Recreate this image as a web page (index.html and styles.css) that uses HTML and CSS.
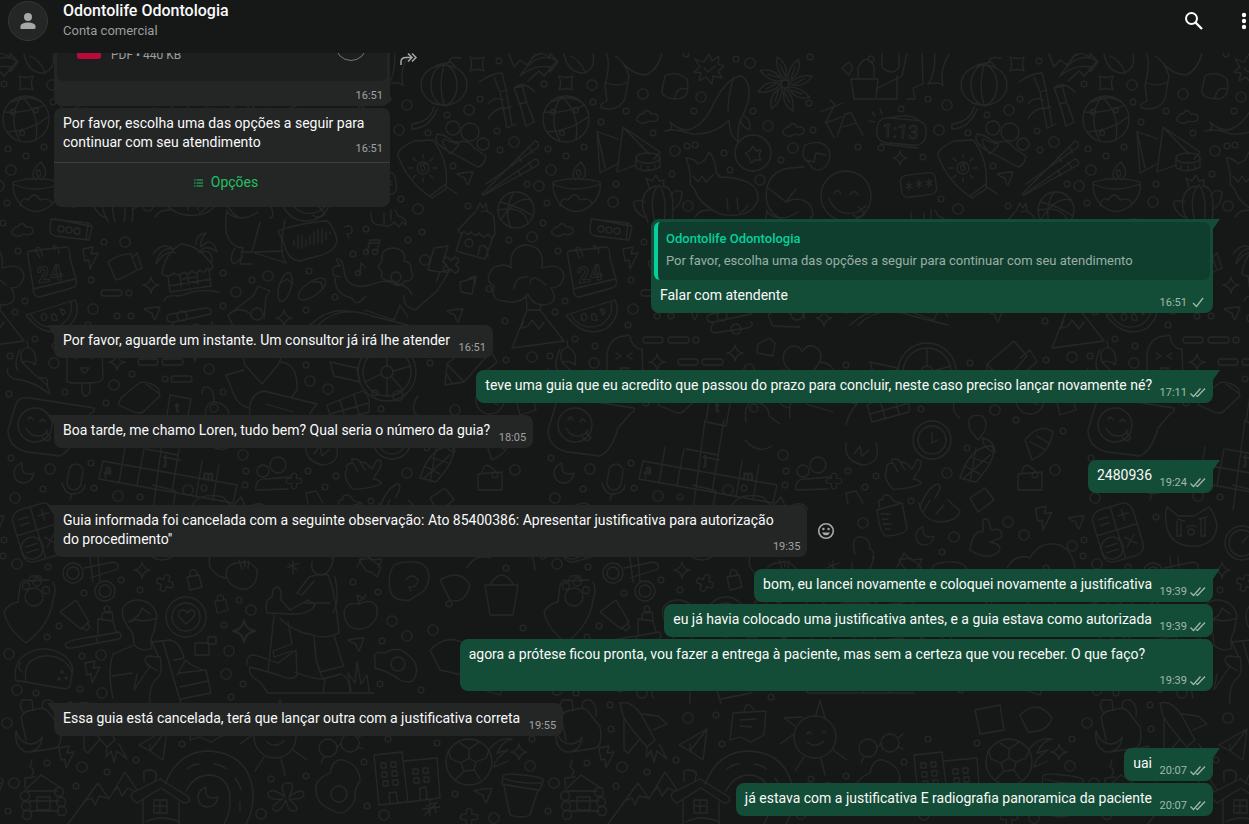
FILE: index.html
```html
<!DOCTYPE html>
<html lang="pt-BR">
<head>
<meta charset="utf-8">
<meta name="viewport" content="width=device-width, initial-scale=1">
<title>Odontolife Odontologia</title>
<link rel="stylesheet" href="styles.css">
</head>
<body>
<div class="app">
<svg class="wallpaper" aria-hidden="true">
<defs>
<symbol id="spark" viewBox="-10 -10 20 20" overflow="visible"><path d="M0-8Q1-1 8 0Q1 1 0 8Q-1 1-8 0Q-1-1 0-8Z"/></symbol>
<symbol id="bolt" viewBox="-10 -14 20 28" overflow="visible"><path d="M-7-9L3-11L1-4L8-5L0 11L-1 2L-5 3Z"/></symbol>
<symbol id="cloud" viewBox="-12 -8 24 16" overflow="visible"><path d="M-8 5Q-13 2-8-1Q-7-4-4-3Q0-10 4-3Q12-4 11 2Q9 6 2 4Q-3 8-8 5Z"/></symbol>
<symbol id="plus" viewBox="-12 -12 24 24" overflow="visible"><path d="M-3-3V-8Q0-11 3-8V-3H8Q11 0 8 3H3V8Q0 11-3 8V3H-8Q-11 0-8-3Z"/></symbol>
<symbol id="arrow" viewBox="-10 -10 20 20" overflow="visible"><path d="M-8-4Q0-6 8-6Q6 0 3 7Q1 6 0 0Q-4-1-8-4Z"/></symbol>
<symbol id="lock" viewBox="-10 -12 20 24" overflow="visible"><path d="M-7-3L5-5L8 7L-4 10ZM-4-4Q-5-11 0-10Q3-10 3-5"/></symbol>
<symbol id="moon" viewBox="-12 -12 24 24" overflow="visible"><path d="M-2-10Q-4 4 10 0Q8 10-1 10Q-10 9-10-1Q-9-8-2-10Z"/></symbol>
<path id="dots" d="M499 61h0M4 84h0M480 99h0M447 115h0M53 102h0M61 122h0M497 131h0M428 133h0M8 149h0M44 147h0M26 156h0M500 150h0M453 166h0M527 184h0M76 184h0M468 206h0M7 203h0M86 111h0M113 133h0M155 145h0M154 111h0M196 59h0M213 111h0M273 130h0M269 103h0M270 57h0M184 153h0M190 170h0M132 174h0M241 160h0M3 223h0M509 240h0M422 232h0M18 251h0M408 240h0M91 280h0M25 301h0M15 312h0M489 289h0M505 321h0M88 325h0M35 339h0M55 346h0M10 356h0M506 360h0M430 363h0M104 242h0M223 273h0M252 280h0M223 306h0M309 271h0M335 297h0M306 310h0M366 229h0M353 254h0M117 316h0M131 316h0M129 293h0M132 374h0M65 392h0M106 403h0M165 379h0M223 392h0M306 365h0M375 393h0M381 409h0M9 394h0M11 458h0M91 463h0M246 471h0M245 485h0M336 476h0M308 471h0M43 489h0M94 488h0M140 497h0M204 488h0M325 487h0M371 501h0M4 540h0M3 556h0M48 567h0M121 580h0M140 590h0M353 582h0M84 593h0M107 609h0M59 626h0M47 637h0M82 656h0M36 693h0M80 689h0M239 600h0M224 625h0M243 684h0M231 697h0M378 592h0M382 641h0M380 684h0M47 763h0M107 772h0M136 760h0M182 744h0M76 786h0M8 811h0M271 779h0M306 776h0M364 762h0M367 806h0M388 739h0M437 743h0M532 739h0M455 794h0M176 715h0M70 705h0M71 729h0M402 552h0M506 568h0M76 517h0M331 59h0M427 448h0M476 420h0M523 431h0M449 604h0M523 628h0M421 690h0M513 680h0M495 475h0M318 147h0M341 148h0M361 109h0M388 99h0M383 157h0M401 199h0M147 146h0M146 54h0"/>
<path id="rings" d="M52 85h0M407 105h0M469 110h0M514 142h0M11 170h0M-1 186h0M73 202h0M418 209h0M103 94h0M135 151h0M161 97h0M210 63h0M228 126h0M253 148h0M220 180h0M148 206h0M532 237h0M425 260h0M93 309h0M532 357h0M54 363h0M125 242h0M268 276h0M236 292h0M209 369h0M114 385h0M310 381h0M328 389h0M398 396h0M50 469h0M243 455h0M407 473h0M15 498h0M118 496h0M188 490h0M17 564h0M9 654h0M101 655h0M17 690h0M102 693h0M7 723h0M251 610h0M229 651h0M226 674h0M392 621h0M407 636h0M82 767h0M14 783h0M261 814h0M384 815h0M530 766h0M494 818h0M148 718h0M323 523h0M468 522h0M484 535h0M532 546h0M414 537h0M399 130h0M433 630h0M500 650h0M515 470h0M455 410h0"/>
<pattern id="doodles" width="540" height="960" patternUnits="userSpaceOnUse">
<g id="tile" fill="none" stroke="#252727" stroke-width="1.3" stroke-linecap="round" stroke-linejoin="round">
<use href="#dots" stroke-width="7"/>
<use href="#dots" stroke="#161717" stroke-width="4.4"/>
<use href="#rings" stroke-width="11.5"/>
<use href="#rings" stroke="#161717" stroke-width="8.9"/>

<circle cx="26" cy="119" r="23"/><path d="M4 112Q24 114 45 105M7 132Q30 131 48 117M21 97Q7 118 20 141M22 97Q40 113 36 139M12 102Q30 94 41 102"/><circle cx="13" cy="112" r="2.500"/><circle cx="36" cy="110" r="2.500"/><circle cx="22" cy="133" r="2.500"/>
<path d="M19 76Q26 79 33 76Q30 83 33 90Q26 87 19 90Q22 83 19 76Z"/><path d="M470 57Q477 60 484 57Q481 64 484 71Q477 68 470 71Q473 64 470 57Z"/>
<path d="M-8 57L2 53L17 61L4 76L-1 71L-12 81M24 54Q28 74 45 73Q56 67 53 54M30 56Q40 60 45 72"/>
<ellipse cx="444" cy="85" rx="23" ry="20"/><ellipse cx="444" cy="85" rx="13" ry="20"/><path d="M444 65Q438 86 444 105M437 65L451 62L455 66M449 62Q449 56 461 58M432 103L446 106M434 107Q430 122 412 124V129Q430 128 437 109"/>
<path d="M508 52L514 67L520 60L527 65L536 54M520 76Q534 54 550 58V53L558 62L550 72V67Q535 64 520 76"/>
<path d="M479 82Q492 73 502 73L506 90L512 125M494 77L500 92L507 128L516 124M500 92L507 90M503 109L511 107M514 88L520 104L526 126L534 122M522 86L527 103L534 122M514 88L524 86M519 104L527 102M488 104Q494 96 504 100M488 119Q494 108 504 108M514 88Q523 80 535 92"/>
<path d="M66 53Q71 63 65 85L67 101Q58 104 62 108Q78 112 85 99L89 76Q84 60 75 56M66 83Q78 87 88 82M83 63Q91 74 106 75Q118 70 122 53"/>
<path d="M125 76Q136 70 147 79Q151 98 137 99Q121 98 122 90ZM135 98Q137 86 147 89"/>
<path d="M169 54L172 61L179 56L178 64L184 66L178 71L182 78L173 76L172 84L166 77L159 81L161 73L154 72L160 67L155 59L164 62ZM164 68L168 72L175 66"/>
<path d="M125 131Q135 130 130 122Q138 130 148 130Q164 126 174 103Q188 76 202 76Q216 88 203 115Q197 124 198 142Q189 135 189 120Q175 135 151 134Q136 128 125 131ZM203 115Q211 119 210 130Q203 128 200 120M188 111Q188 94 194 77"/>
<g id="petals"><path id="petal" d="M245 80Q235 71 237 57Q250 65 245 80ZM245 75Q241 67 240 65"/><use href="#petal" transform="rotate(45 245 84)"/><use href="#petal" transform="rotate(90 245 84)"/><use href="#petal" transform="rotate(135 245 84)"/></g><use href="#petals" transform="rotate(180 245 84)"/><circle cx="245" cy="84" r="4"/>
<use href="#cloud" x="95" y="109" width="24" height="16"/><use href="#cloud" x="241" y="122" width="24" height="16"/><use href="#cloud" x="10" y="222" width="24" height="16"/>
<path d="M482 194L535 141Q540 142 538 147L486 184M483 195L535 159Q540 160 538 165L484 195ZM518 157L522 162M529 147L533 153M518 170L521 176M528 162L532 168"/>
<path d="M433 140L414 141Q393 151 399 158Q408 182 432 198L446 189Q449 160 433 140ZM430 196L446 184M447 187L457 194"/><circle cx="423" cy="168" r="6"/><path d="M423 165Q428 170 422 171Q418 165 425 164M423 158V155M423 178V182M413 168H409M433 168H437M416 161L413 158M430 161L433 158M416 175L413 178M430 175L433 178"/>
<circle cx="453" cy="128" r="7"/><circle cx="470" cy="132" r="9"/><circle cx="483" cy="144" r="6"/><path d="M437 134Q432 143 450 152L478 167Q484 166 486 156L474 148Q467 137 455 144Q448 135 437 134ZM443 144Q441 136 450 142Q460 140 458 146L450 154Z"/>
<path d="M13 182Q36 175 60 182Q62 196 50 206Q35 218 20 204Q12 194 13 182ZM13 184Q34 194 60 184M36 180Q28 173 41 162Q50 174 41 180M38 176Q34 170 39 170Q43 175 38 177M20 206Q22 196 28 200Q35 190 40 200Q50 197 52 204"/>
<circle cx="516" cy="210" r="18"/><path d="M500 202Q516 205 533 216M501 220Q515 196 531 200M514 192Q503 210 511 228M498 210Q525 205 528 224"/>
<path d="M57 131L60 173L77 164M58 132L78 139M57 131L65 168M83 127L77 172L96 165M83 127L120 152L114 159M83 127L109 154"/><ellipse cx="108" cy="158" rx="12" ry="5"/><path d="M96 159V168Q108 174 120 167V159M101 165V169M108 166V170M115 165V168"/>
<circle cx="213" cy="153" r="18"/><path d="M213 146L216 151L221 150L219 156L221 160L215 160L211 163L209 157L205 153L210 151Z"/>
<path d="M146 158Q154 158 158 164L165 160L169 152Q176 160 176 172L180 177Q220 178 218 200Q210 220 180 214Q158 203 155 190L150 184Q152 175 146 158ZM153 176L158 182L162 176L166 182L173 175M188 210L187 199M198 210L197 198M208 205Q206 210 199 213M155 217Q158 210 170 210"/>
<path d="M116 186Q100 190 103 210L108 222M119 185Q108 195 115 222M124 186Q136 188 132 222M119 185Q128 198 124 222M109 187L106 178L112 181L116 175L119 181L124 180L123 187M105 202Q92 198 94 206Q98 216 107 218M131 196Q134 188 142 192Q142 205 132 210"/>
<path d="M227 187Q232 170 250 168L264 167M227 187L246 202L249 198L256 189M227 187Q223 210 240 218M246 202Q260 195 270 205Q276 217 270 218M265 145Q282 138 289 150Q292 160 285 167Q275 175 268 162Q260 158 265 145M265 160L274 162L276 153L286 155"/><circle cx="306" cy="196" r="25"/><path d="M294 194Q297 187 301 194M310 195Q314 188 318 195M289 199Q298 218 318 212L326 206M313 215Q318 220 325 214L319 207"/>
<rect x="361" y="174" width="35" height="22" rx="6" transform="rotate(-7 378 185)"/><path d="M369 182V190M366 184L372 188M366 188L372 184M379 180V188M376 182L382 186M376 186L382 182M389 179V187M386 181L392 185M386 185L392 181"/>
<rect x="337" y="119" width="49" height="25" rx="10" transform="rotate(5 361 131)"/><path d="M341 144L378 148M350 118Q370 113 378 120M332 112L335 116M340 109L342 114M329 121L334 122"/><text x="342" y="138" font-size="19" transform="rotate(4 361 131)">1:13</text>
<path d="M280 112L303 103M290 100L295 104L286 122L294 138M285 123L302 117M297 137L305 114L311 113L323 135M303 127L316 123"/>
<path d="M311 79H338L336 99H314ZM336 89L362 76L367 53M357 76V99H338M367 99H375L373 88L383 84L382 53M318 78V68Q325 52 334 66V77M342 53V67Q352 77 359 67V53M309 62L302 68L309 75L313 67ZM395 53Q395 76 388 84M388 84Q400 81 403 86Q399 70 409 54"/>
<path d="M475 212L458 230Q461 236 464 231Q467 237 471 232Q475 238 479 233Q484 240 488 234Q492 241 495 234L494 217Q488 209 481 212M462 233L456 251L485 259L493 237M476 211L480 203L483 208L486 203L487 211M478 255L480 246Q488 243 488 257"/><circle cx="469" cy="243" r="4"/>
<path d="M51 219L88 223Q94 225 91 231L89 240L55 236Q49 234 50 229ZM55 219L90 226M88 223L86 240"/><circle cx="61" cy="229" r="3"/><circle cx="69" cy="230" r="3"/><circle cx="77" cy="231" r="3"/>
<path d="M29 251L67 247Q70 248 70 258L76 279Q78 286 72 288L39 297Q33 297 33 286L28 257Q27 252 29 251ZM33 289L75 279M40 258Q32 245 40 248L43 256M55 250Q51 242 58 248L59 253"/><text x="37" y="281" font-size="22" font-weight="bold" transform="rotate(-9 52 272)">24</text>
<path d="M26 315L75 300Q82 315 67 328Q45 340 26 315ZM31 315Q42 332 61 325Q74 316 71 302M41 316Q45 310 47 318Q43 324 41 316M52 314Q56 312 57 320Q50 322 52 314M60 309Q68 310 63 315Z"/>
<use href="#bolt" x="80" y="244" width="20" height="28"/><path d="M108 262Q122 253 131 254L137 270Q124 278 116 280Z"/><path d="M133 257L137 253L142 268L138 270"/>
<path d="M162 274Q165 253 181 244Q199 245 213 266Q212 272 207 268Q205 275 200 270Q196 275 192 271Q188 276 184 272Q178 277 174 273Q168 279 162 274ZM168 276L170 292L211 286L209 270M169 286L211 279M180 275L181 287M187 273L189 285M197 272L198 284M182 279L196 277M164 301Q165 294 180 296Q200 288 219 292M153 254Q162 241 174 249Q160 246 156 264Q166 249 176 253M196 244Q196 234 206 233Q199 241 201 247Q212 235 217 252Q205 243 199 253Q212 247 212 262"/>
<path d="M278 231L290 227Q315 221 328 221Q336 231 337 241Q335 252 318 256L300 261Q288 260 285 246ZM294 240V245M298 236V248M302 235V248M306 240V246M310 236V244M314 232V245M318 230V243M322 229V243M326 232V239M330 232V234"/>
<path d="M227 210Q221 246 243 248M260 222L252 252L286 263Q278 252 285 220M227 212Q240 224 258 212M243 248L240 264L252 264M252 252L241 252M235 248Q228 260 234 264L243 257M255 252L283 251"/>
<ellipse cx="285" cy="287" rx="6" ry="15" transform="rotate(16 285 287)"/><ellipse cx="312" cy="289" rx="7" ry="16" transform="rotate(55 312 289)"/><path d="M280 283L287 279L293 284M313 282L321 282L323 289"/>
<path d="M367 252L370 240L380 240L377 251M369 243L379 243"/><circle cx="366" cy="252" r="2.500"/><circle cx="375" cy="252" r="2.500"/><path d="M360 274L361 263L365 267"/><circle cx="358" cy="273" r="2.500"/>
<path d="M371 212Q370 226 382 225Q390 228 394 222L399 227L402 222L406 225Q407 218 398 216L395 210M384 213V224M391 210V220M344 227Q352 224 352 230Q353 234 347 234L349 238"/>
<path d="M340 277L333 275Q332 264 340 266L336 259Q341 258 343 265L345 276Q350 290 370 285Q385 279 392 283Q408 284 412 295M366 296Q356 308 352 298Q335 295 335 278M382 262Q380 248 394 248Q407 250 404 261Q412 262 411 270Q416 281 405 281Q398 290 391 281Q379 280 382 272Q375 266 382 262Z"/><circle cx="396" cy="277" r="5"/>
<path d="M504 301Q490 301 494 286Q483 280 493 268Q505 262 511 268Q509 246 526 245Q545 246 542 268Q562 262 564 276Q562 288 551 288Q560 304 543 305Q531 304 528 294Q520 305 504 301ZM514 289Q515 276 528 277M530 283Q532 272 546 285M526 295L527 310H540L541 304M527 310L512 348L564 341L540 310M524 320L521 328L528 326L532 320L539 329L544 322M434 248L448 246L443 262L450 270L437 291L415 310Q402 306 404 296M434 248L428 270L440 272L450 270M440 272L436 282M460 282L475 278L472 294L461 292ZM469 278L476 276L475 284"/>
<use href="#plus" x="439" y="253" width="24" height="24" transform="rotate(45 451 265)"/>
<use href="#spark" x="141" y="275" width="20" height="20"/><use href="#spark" x="274" y="308" width="20" height="20"/><use href="#spark" x="107" y="352" width="20" height="20"/><use href="#spark" x="132" y="560" width="20" height="20"/><use href="#spark" x="230" y="617" width="28" height="28"/><use href="#spark" x="509" y="742" width="20" height="20"/><use href="#spark" x="351" y="149" width="18" height="18"/><use href="#spark" x="185" y="343" width="20" height="20"/>
<use href="#arrow" x="142" y="303" width="20" height="20"/><use href="#arrow" x="455" y="168" width="20" height="20"/><use href="#arrow" x="445" y="305" width="20" height="20"/><use href="#arrow" x="472" y="784" width="22" height="22"/><use href="#arrow" x="346" y="634" width="20" height="20"/>
<path d="M167 319Q166 315 172 314L205 308Q213 308 211 314L174 322Q168 323 167 319ZM174 322Q168 331 174 333L207 328Q215 326 211 322"/><circle cx="182" cy="316" r="5"/><circle cx="196" cy="329" r="5"/>
<path d="M228 315L254 295M254 295L258 286L270 291L266 297L264 319M228 315L233 326L260 327M228 315Q240 305 250 314"/><circle cx="257" cy="314" r="6"/>
<rect x="101" y="290" width="21" height="6" rx="3"/><rect x="138" y="359" width="20" height="6" rx="3"/><rect x="162" y="359" width="21" height="6" rx="3"/><rect x="171" y="376" width="21" height="6" rx="3"/><rect x="103" y="337" width="20" height="6" rx="3"/><rect x="128" y="337" width="21" height="6" rx="3"/><circle cx="156" cy="340" r="3"/><path d="M218 344L229 338L235 343L233 356L217 353Z"/>
<path d="M67 382V354Q70 336 86 336Q91 333 91 341Q96 350 102 349L103 378Q101 383 90 383H72ZM82 383V392Q85 400 90 392V383M76 353L81 356L76 359M92 353L87 356L92 359M80 368H89M81 369Q84 377 88 369"/>
<path d="M8 368Q5 374 14 379Q32 380 50 394Q48 382 35 375L22 362M22 362Q18 350 28 347L27 341M28 347Q38 352 35 365Q30 360 22 362M20 349Q13 364 18 371M39 378Q50 376 47 386"/>
<path d="M262 384L245 365Q240 352 250 347Q259 344 262 352Q268 342 277 348Q285 355 277 366ZM226 375L244 370M226 375L234 395Q240 407 250 408M279 362Q298 362 297 390L291 398M250 418Q247 394 264 391L317 404Q308 414 306 425M266 404L293 412"/>
<circle cx="387" cy="372" r="29"/><circle cx="387" cy="372" r="24"/><circle cx="387" cy="372" r="6"/><path d="M387 348V366M387 378V396M393 371L411 366M381 374L365 382M391 376L403 390M310 325Q330 306 352 312M318 325Q340 304 372 316L408 325M365 310L394 320L400 305L408 317M330 362L357 368L360 382L334 376Z"/>
<path d="M445 385L447 364L474 341L487 356L464 382ZM447 364L464 382M447 375L453 384M480 358L490 350L497 362L485 372"/>
<path d="M121 398L139 383Q147 380 158 388L160 396L145 410Q140 416 130 410L118 405ZM146 384L158 393M170 395L191 399L186 426L166 422ZM202 394Q202 386 207 387Q214 388 214 402M206 422Q203 401 216 402Q229 405 229 416L240 424"/><circle cx="214" cy="408" r="4"/><text x="175" y="412" font-size="13">t</text>
<path d="M327 405L362 391Q371 394 369 412L332 422ZM340 400L345 418M354 395L359 414M330 414L369 403M418 396Q408 410 420 418"/>
<path d="M16 404Q19 396 30 398L94 408Q96 411 90 414L78 428Q72 450 60 456L28 452Q8 448 8 430Z"/><circle cx="35" cy="425" r="17"/><path d="M28 420Q30 414 33 420M40 422Q43 416 45 422M26 428Q32 440 45 434L48 430M42 436Q46 444 51 438L46 432"/>
<path d="M103 461L237 485L233 503L99 479ZM125 447L119 483M144 449L137 485M184 420L172 492M165 420L153 510M146 449L178 455M163 457L180 460M202 461L196 497M219 464L213 500M153 485L176 491L171 515M106 478L104 472"/><text x="105" y="474" font-size="12">a</text><text x="164" y="464" font-size="12">j</text><text x="203" y="480" font-size="12">m</text>
<use href="#moon" x="12" y="461" width="24" height="24"/><rect x="68" y="464" width="14" height="26" rx="7" transform="rotate(10 75 477)"/><path d="M62 483Q65 495 74 494Q84 493 85 485M72 494L70 500M205 440Q218 455 232 446M306 443Q303 460 322 465Q342 464 336 443M314 454L320 446L322 456L329 450"/>
<circle cx="263" cy="471" r="6"/><circle cx="278" cy="465" r="8"/><path d="M256 490Q255 478 266 479L290 477M257 490L288 489"/><use href="#plus" x="284" y="471" width="20" height="20"/>
<path d="M347 469Q345 464 352 463L352 459Q357 458 361 462L366 463L372 469L377 460Q384 459 379 470L373 479Q381 480 381 484Q365 490 353 489Q342 478 347 469ZM353 463L358 472M360 462L365 470M380 507Q388 486 398 484Q403 486 395 498M383 512L390 500M340 507Q336 500 343 499Q342 493 350 496Q355 504 360 502"/><circle cx="392" cy="440" r="19"/><circle cx="392" cy="440" r="14"/><path d="M392 433V443L398 440"/>
<path d="M192 505Q200 492 223 497L232 507L241 497L247 510Q258 498 268 509M308 504L306 493L316 491L323 503"/>
<g transform="rotate(-17 37 533)"><rect x="17" y="506" width="42" height="54" rx="10"/><path d="M38 506V560M17 530H59M48 512V523M43 517H54M23 515H33M23 521H33"/><circle cx="28" cy="546" r="11"/><path d="M22 543H34M22 549H34M43 539L53 549M53 539L43 549"/></g>
<path d="M87 507L98 516L114 516L129 507Q134 512 137 525Q136 543 118 546Q92 548 87 528Q84 515 87 507ZM98 519L105 521M97 521V536H101V522M119 519L127 517M121 519V536H125V518M107 527Q112 524 116 527"/><circle cx="111" cy="532" r="3"/>
<circle cx="162" cy="543" r="17"/><circle cx="162" cy="543" r="13"/><path d="M162 543L168 536M337 510L362 503L367 528Q366 535 346 536Q340 534 337 510ZM341 514H350M342 519H348M343 524H351M345 529H350M379 503Q382 519 398 522Q417 522 420 511L408 500M396 514L404 505M430 550Q433 529 443 532L443 520Q449 515 451 530Q464 527 461 538L450 542Q463 545 459 551Q448 562 430 550Z"/>
<use href="#bolt" x="491" y="503" width="24" height="30"/><use href="#moon" x="374" y="525" width="22" height="22"/><use href="#bolt" x="82" y="658" width="20" height="28"/><use href="#bolt" x="56" y="743" width="20" height="28"/><use href="#arrow" x="526" y="511" width="20" height="22"/>
<path d="M467 568Q475 553 490 558Q500 540 520 545Q534 552 535 570M315 554Q311 540 318 537Q330 536 330 549Q336 552 332 559M357 567L364 553L371 560L382 559L378 568"/>
<path d="M53 582Q57 588 53 600Q50 625 26 643Q7 628 4 612Q8 604 18 602L20 586Q22 578 28 581M28 581L31 576L40 576L42 580L49 580Z"/><circle cx="34" cy="597" r="9"/><circle cx="26" cy="586" r="3.500"/><circle cx="37" cy="582" r="4"/><circle cx="46" cy="590" r="3.500"/><circle cx="73" cy="573" r="10"/><circle cx="73" cy="573" r="6"/><circle cx="105" cy="591" r="10"/><circle cx="105" cy="591" r="6"/><path d="M84 568L113 562Q120 563 118 569L90 578M90 557L93 582M98 557L100 581"/>
<path d="M60 612L76 600L89 622L81 629ZM82 627L86 631L90 627L87 622M65 645Q65 640 97 636L119 632Q123 636 119 639L72 648Q66 649 65 645ZM96 637L98 643M98 635L98 619L113 621L116 632M102 619Q101 611 107 613L112 612L113 620"/>
<path d="M16 681Q12 660 30 652Q45 645 62 654Q75 663 72 674L70 686Q68 690 60 688L20 681ZM26 681Q22 658 45 656Q64 655 72 672M20 663Q17 670 23 672"/><circle cx="62" cy="672" r="1"/><circle cx="66" cy="678" r="1"/><circle cx="59" cy="679" r="1"/>
<path d="M128 627Q118 612 126 604Q137 596 150 604Q159 612 156 621L154 632Q149 640 152 648Q142 653 134 645L133 634L128 627M128 622Q140 617 142 608L150 614M131 622Q135 618 141 621L150 620L157 618M132 646L113 654Q107 672 113 698M152 642L170 640Q180 642 184 658L174 660M152 642L158 656M137 674L134 690L150 666Q141 660 148 656L160 657Q164 675 155 680Q148 690 150 704M147 665L158 671M163 642L181 704M179 673L206 670L211 693L181 699M177 675L184 663Q184 658 190 664L202 670M112 676L132 673M180 687L208 681"/>
<circle cx="186" cy="617" r="20"/><circle cx="186" cy="617" r="14"/><path d="M186 624L179 617Q177 611 182 610Q186 609 187 613Q192 607 195 613Q195 617 186 624Z"/>
<use href="#plus" x="154" y="572" width="22" height="22" transform="rotate(20 165 583)"/><use href="#lock" x="184" y="568" width="20" height="24"/><use href="#lock" x="212" y="592" width="18" height="24"/><rect x="195" y="643" width="14" height="12"/><rect x="208" y="637" width="8" height="7"/>
<path d="M227 569Q223 584 241 589Q255 590 257 575Q259 567 247 562Q230 562 227 569ZM239 560L242 569M244 560L245 567M249 561L248 568M210 557Q206 569 221 577L227 578M289 564L297 570M293 561V574M287 568L299 563"/>
<path d="M312 562Q310 574 322 575Q330 574 334 557M309 577Q320 573 328 575Q335 590 339 633Q325 640 309 634Q297 633 280 619M309 577L297 593L302 595L314 581M290 610L308 600L315 605Q310 615 291 614L267 613Q264 600 272 597L273 590Q278 583 281 592L281 600L290 610M335 577Q340 600 333 613M305 603L330 603M274 615L268 672M288 622L292 644L273 651L274 657L292 651M314 636L316 660L320 672L344 666L341 659L334 635M320 672L323 679L341 674M247 665Q246 652 258 656L278 663L296 650L297 675Q292 682 279 675L250 667Q247 675 260 682L268 693H374M295 672Q315 680 325 679L323 693M343 675Q350 679 350 692M351 691L348 673L355 683L357 662L361 684L367 675L369 691"/>
<path d="M359 604Q347 601 344 612Q345 628 357 629Q370 630 376 618Q380 606 372 602Q365 600 359 604ZM359 603L357 595L365 599M360 601L366 595"/>
<path d="M375 660Q372 650 385 653Q398 645 408 655Q420 664 415 677Q412 685 400 680Q390 672 375 668Z"/><circle cx="398" cy="664" r="7"/><path d="M394 565Q387 575 390 590Q393 602 410 600L425 590Q435 570 420 563Q405 560 394 565ZM406 580Q412 572 418 580Q417 588 409 587L411 591M359 560L370 558L381 567L377 577L371 572L366 571Z"/>
<path d="M23 712L20 706L22 700L32 700L33 710M21 717Q24 710 34 710Q45 705 50 714L60 727Q63 744 56 748L30 752M21 717L26 740M43 709Q40 699 50 700Q58 705 56 716M16 731Q20 744 32 744Q40 742 42 737Q41 752 26 752Q14 747 16 731Z"/>
<path d="M80 703Q92 700 102 716L115 740L107 747Q90 728 83 716ZM102 714L118 716L127 724L113 730M84 718V750L88 753L99 740M107 747L106 757L111 751L114 762L117 751L127 759L119 744"/>
<path d="M167 729L139 745L150 751L163 760L167 729L150 751L150 744M193 713L226 711L224 735L211 742L200 737L190 740ZM200 720L216 719M200 726L212 727M204 712Q206 698 214 710"/>
<circle cx="275" cy="737" r="21"/><path d="M267 734Q269 730 271 734M282 733Q284 729 286 733M267 742Q275 749 284 741M240 744L254 734M255 771L264 757M285 775L281 759M307 760L293 750M276 715L280 700L285 718M255 726L244 718L262 717"/>
<circle cx="328" cy="748" r="9"/><circle cx="350" cy="743" r="9"/><path d="M337 747L341 744M324 757L321 763M358 747L363 749M358 738L363 734"/>
<path d="M316 790Q314 780 330 773Q333 758 343 760Q360 765 360 781Q354 788 355 800Q345 819 332 810Q316 804 316 790Z"/><circle cx="339" cy="794" r="8"/>
<path d="M374 755L402 752L408 802L379 805ZM404 761L437 758L440 798L408 802M381 763H386V768H381ZM391 762H396V767H391ZM382 772H387V777H382ZM392 771H397V776H392ZM383 781H388V786H383ZM393 780H398V785H393ZM390 804L389 793L396 792L398 803M413 769H418V774H413ZM423 768H428V773H423ZM414 778H419V783H414ZM424 777H429V782H424ZM420 800L420 788L426 787L427 799"/>
<circle cx="469" cy="762" r="23"/><path d="M469 758L476 762L474 770L464 771L461 763ZM469 758V749L460 743M469 749L479 742M476 762L486 758L490 748M474 770L480 779M464 771L456 779M461 763L451 759L448 750M490 748Q500 737 512 739Q502 741 497 753L508 750Q495 758 494 767L508 761"/>
<path d="M503 776Q505 773 522 775Q545 777 543 781L540 790Q523 788 502 784ZM504 786L510 815Q522 819 530 815L538 790M505 779Q520 784 542 783M426 806L434 803L436 812M430 800V816M423 809L440 807M425 815L437 802"/><use href="#plus" x="458" y="806" width="22" height="22"/>
<path d="M25 790L41 775L61 788M25 778V787M25 778L35 777M32 775Q36 770 30 767L32 760M27 791H57M29 801H59M30 811H59M37 797H50V810H37Z"/><circle cx="25" cy="796" r="4.500"/><circle cx="26" cy="806" r="4.500"/><circle cx="27" cy="815" r="4.500"/><circle cx="59" cy="792" r="4.500"/><circle cx="61" cy="802" r="4.500"/><circle cx="62" cy="811" r="4.500"/>
<path d="M68 824L98 783L109 799L125 772L137 790M84 801L92 798L95 805L99 796L107 798M114 791L118 787L122 796L128 788L134 791M132 798Q129 793 136 791L160 779L189 797Q191 803 184 803L161 788L137 803Q134 802 132 798ZM143 800V824M179 802V824M144 781V774Q142 770 150 770Q158 771 156 776L155 781M154 800H167V813H154ZM160 800V813M154 806H167M146 822Q160 814 180 822"/>
<path d="M165 784Q178 751 209 751Q247 753 253 790Q254 810 246 824M186 791Q194 775 210 775Q229 777 230 797Q231 812 224 824M187 769Q193 764 199 764M214 764Q222 765 226 769M235 778Q240 785 241 790M240 802V811"/><use href="#moon" x="196" y="785" width="24" height="24"/>
<path d="M285 797Q278 782 289 783Q296 782 289 797Q303 786 304 795Q302 800 289 799Q302 810 294 811Q288 812 286 800Q278 816 273 809Q272 804 283 799Q268 801 268 793Q272 787 285 797Z"/>
<path d="M430 430Q425 412 442 416Q452 425 438 440ZM442 438Q454 440 455 452Q444 450 442 438M485 440Q500 422 513 432Q510 452 492 460ZM490 442L506 450M497 436L510 444M420 478Q430 446 452 446Q458 458 436 482ZM424 466L440 474M430 457L448 463M436 448L430 482M450 455L424 478M478 490V474L502 472V490ZM482 473Q484 458 496 472M430 498L445 488L454 500L438 512ZM440 580Q460 568 470 585Q465 605 450 600ZM485 585H518L513 615H490ZM490 585Q501 565 514 585M430 650Q450 630 470 648L462 675L440 670ZM480 665Q492 655 508 668L500 695L484 690ZM435 710L460 705L464 730L440 734ZM480 715Q498 698 512 718Q508 732 488 732Z"/>
<circle cx="490" cy="400" r="14"/><path d="M490 390V401L498 405"/><path d="M515 395L531 390L536 410L520 415Z"/>
</g>
<use href="#tile" x="540"/><use href="#tile" x="-540"/>
</pattern>
</defs>
<rect width="100%" height="100%" fill="url(#doodles)"/>
</svg>

<svg class="sprite" aria-hidden="true">
<symbol id="check" viewBox="0 0 16 11"><path d="M3 6L6.500 9.500L13 1" fill="none" stroke="currentColor" stroke-width="1.300"/></symbol>
<symbol id="checks" viewBox="0 0 16 11"><path d="M0.500 6.500L3.500 9.500L10.500 1.500M6 8.500L7.500 9.500L15 1.500" fill="none" stroke="currentColor" stroke-width="1.300"/></symbol>
</svg>

<header class="header">
<div class="avatar"><svg width="16" height="18" viewBox="0 0 16 18" aria-hidden="true"><circle cx="8" cy="5" r="4"/><path d="M0.500 17V14.500C0.500 11.500 4.500 10.500 8 10.500S15.500 11.500 15.500 14.500V15.500Q15.500 17 14 17Z"/></svg></div>
<div class="contact"><h1>Odontolife Odontologia</h1><p>Conta comercial</p></div>
<button class="icon-btn" aria-label="Pesquisar"><svg width="20" height="20" viewBox="0 0 20 20"><circle cx="7.500" cy="7.500" r="5.500" fill="none" stroke="currentColor" stroke-width="2"/><path d="M11.500 11.500L18 18" stroke="currentColor" stroke-width="2.400"/></svg></button>
<button class="icon-btn menu" aria-label="Mais opções"><svg width="6" height="18" viewBox="0 0 6 18" fill="currentColor"><circle cx="3" cy="3" r="2.200"/><circle cx="3" cy="9" r="2.200"/><circle cx="3" cy="15" r="2.200"/></svg></button>
</header>

<main class="chat">
<div class="row">
<div class="bubble card">
<div class="doc"><span class="pdf-icon"></span><span class="doc-info">PDF • 440 KB</span><button class="download" aria-label="Baixar"></button></div>
<div class="meta doc-meta">16:51</div>
</div>
<button class="side-btn forward" aria-label="Encaminhar"><svg width="18" height="14" viewBox="0 0 18 14" fill="none" stroke="currentColor" stroke-width="1.500"><path d="M1 13V10Q1 5.500 6 5.500H12M8 1.500L12 5.500L8 9.500M12 1.500L16 5.500L12 9.500"/></svg></button>
</div>
<div class="row joined">
<div class="bubble card list">
<div class="list-body"><p>Por favor, escolha uma das opções a seguir para continuar com seu atendimento</p><div class="meta">16:51</div></div>
<button class="options"><svg width="10" height="8" viewBox="0 0 10 8" stroke="currentColor" aria-hidden="true"><path d="M0 1H1.500M0 4H1.500M0 7H1.500M2.500 1H9M2.500 4H9M2.500 7H9"/></svg>Opções</button>
</div>
</div>
<div class="row out">
<div class="bubble quoting tail">
<blockquote class="quote"><strong>Odontolife Odontologia</strong><span>Por favor, escolha uma das opções a seguir para continuar com seu atendimento</span></blockquote>
<p>Falar com atendente<span class="space"></span></p><div class="meta">16:51<svg width="16" height="11"><use href="#check"/></svg></div>
</div>
</div>
<div class="row"><div class="bubble tail"><p>Por favor, aguarde um instante. Um consultor já irá lhe atender<span class="space"></span></p><div class="meta">16:51</div></div></div>
<div class="row out"><div class="bubble tail"><p>teve uma guia que eu acredito que passou do prazo para concluir, neste caso preciso lançar novamente né?<span class="space"></span></p><div class="meta">17:11<svg width="16" height="11"><use href="#checks"/></svg></div></div></div>
<div class="row"><div class="bubble tail"><p>Boa tarde, me chamo Loren, tudo bem? Qual seria o número da guia?<span class="space"></span></p><div class="meta">18:05</div></div></div>
<div class="row out"><div class="bubble tail"><p>2480936<span class="space"></span></p><div class="meta">19:24<svg width="16" height="11"><use href="#checks"/></svg></div></div></div>
<div class="row"><div class="bubble tail"><p>Guia informada foi cancelada com a seguinte observação: Ato 85400386: Apresentar justificativa para autorização do&nbsp;procedimento"<span class="space"></span></p><div class="meta">19:35</div></div>
<button class="side-btn" aria-label="Reagir"><svg width="18" height="18" viewBox="0 0 18 18"><circle cx="9" cy="9" r="7.300" fill="none" stroke="currentColor" stroke-width="1.600"/><circle cx="6.400" cy="7" r="1.200" fill="currentColor"/><circle cx="11.600" cy="7" r="1.200" fill="currentColor"/><path d="M5 10.500H13Q12 13.200 9 13.200T5 10.500Z" fill="currentColor"/></svg></button></div>
<div class="row out"><div class="bubble tail"><p>bom, eu lancei novamente e coloquei novamente a justificativa<span class="space"></span></p><div class="meta">19:39<svg width="16" height="11"><use href="#checks"/></svg></div></div></div>
<div class="row out joined"><div class="bubble"><p>eu já havia colocado uma justificativa antes, e a guia estava como autorizada<span class="space"></span></p><div class="meta">19:39<svg width="16" height="11"><use href="#checks"/></svg></div></div></div>
<div class="row out joined"><div class="bubble"><p>agora a prótese ficou pronta, vou fazer a entrega à paciente, mas sem a certeza que vou receber. O que faço?<span class="space wide"></span></p><div class="meta">19:39<svg width="16" height="11"><use href="#checks"/></svg></div></div></div>
<div class="row"><div class="bubble tail"><p>Essa guia está cancelada, terá que lançar outra com a justificativa correta<span class="space"></span></p><div class="meta">19:55</div></div></div>
<div class="row out"><div class="bubble tail"><p>uai<span class="space"></span></p><div class="meta">20:07<svg width="16" height="11"><use href="#checks"/></svg></div></div></div>
<div class="row out joined"><div class="bubble"><p>já estava com a justificativa E radiografia panoramica da paciente<span class="space"></span></p><div class="meta">20:07<svg width="16" height="11"><use href="#checks"/></svg></div></div></div>
</main>
</div>
</body>
</html>
```
FILE: styles.css
```css
* { box-sizing: border-box; margin: 0; padding: 0; }
body { background: #161717; color: #fafafa; font: 14px/19px Roboto, "Liberation Sans", sans-serif; }
button { background: none; border: 0; color: inherit; font: inherit; cursor: pointer; }
svg { display: block; flex: none; }

.app { position: relative; height: 100vh; display: flex; flex-direction: column; overflow: hidden; }
.wallpaper { position: absolute; inset: 0; width: 100%; height: 100%; }
.wallpaper text { font-family: Roboto, sans-serif; stroke-width: 1px; }
.sprite { position: absolute; width: 0; height: 0; }

.header { position: relative; z-index: 2; flex: none; display: flex; align-items: flex-start; height: 53px; padding: 1px 0 0 8px; background: #161717; }
.avatar { display: grid; place-items: center; flex: none; width: 40px; height: 40px; border: 1px solid #353737; border-radius: 50%; background: #242626; }
.avatar svg { fill: #a6a7a7; }
.contact { flex: 1; min-width: 0; margin-left: 15px; }
.contact h1 { font-size: 16px; line-height: 20px; font-weight: 500; }
.contact p { color: #9c9d9d; font-size: 13px; line-height: 20px; }
.icon-btn { display: grid; place-items: center; width: 40px; height: 40px; }
.icon-btn.menu { margin: 0 -15px 0 10px; }

.chat { position: relative; flex: 1; min-height: 0; display: flex; flex-direction: column; justify-content: flex-end; padding: 0 36px 8px 54px; }
.row { display: flex; align-items: center; flex: none; margin-top: 12px; }
.row.joined { margin-top: 2px; }
.row.out { justify-content: flex-end; }
.bubble { position: relative; display: flex; flex-direction: column; max-width: 65%; padding: 6px 7px 3px 9px; border-radius: 8px; background: #242626; }
.out .bubble { background: #144d37; }
.bubble.tail::before { content: ""; position: absolute; top: 0; left: -7px; width: 14px; height: 12px; background: inherit; clip-path: polygon(0 0, 100% 0, 100% 100%, 60% 100%); }
.out .bubble.tail::before { left: auto; right: -7px; clip-path: polygon(0 0, 100% 0, 40% 100%, 0 100%); }
.space { display: inline-block; width: 36px; height: 4px; }
.out .space { width: 54px; }
.out .space.wide { width: 80px; }
.meta { display: flex; align-items: center; align-self: flex-end; gap: 3px; margin-top: -10px; color: #a1a2a2; font-size: 11px; line-height: 15px; }
.out .meta { color: #a1b8af; }

.card { width: 336px; padding: 3px; }
.doc { display: flex; align-items: flex-end; height: 60px; padding: 0 20px; border-radius: 6px; background: #1d1f1f; }
.pdf-icon { width: 24px; height: 30px; margin-bottom: 22px; border-radius: 3px; background: #b80b39; }
.doc-info { flex: 1; margin: 0 0 16px 10px; color: #9c9d9d; font-size: 12px; }
.download { width: 32px; height: 32px; margin-bottom: 20px; border: 1px solid #777; border-radius: 50%; }
.doc-meta { margin: 7px 4px 0; }
.card.list { padding: 0; }
.list-body { display: flex; flex-direction: column; padding: 6px 7px 6px 9px; }
.list-body .meta { margin-top: -11px; }
.options { display: flex; align-items: center; justify-content: center; gap: 7px; height: 45px; padding: 0 0 5px 8px; border-top: 1px solid #3b3d3d; color: #21c063; }

.side-btn { display: grid; place-items: center; margin-left: 10px; color: #a6a7a7; }
.side-btn.forward { margin-bottom: 6px; }

.quoting { width: 562px; padding-top: 3px; }
.quote { display: flex; flex-direction: column; margin: 0 -4px 6px -6px; padding: 6px 8px 8px; border-left: 4px solid #06cf9c; border-radius: 6px; background: #103e2e; color: #9baea6; font-size: 13px; line-height: 22px; }
.quote strong { color: #06cf9c; font-weight: 500; }
.quoting.tail::before { z-index: -1; }
.row { isolation: isolate; }
```
